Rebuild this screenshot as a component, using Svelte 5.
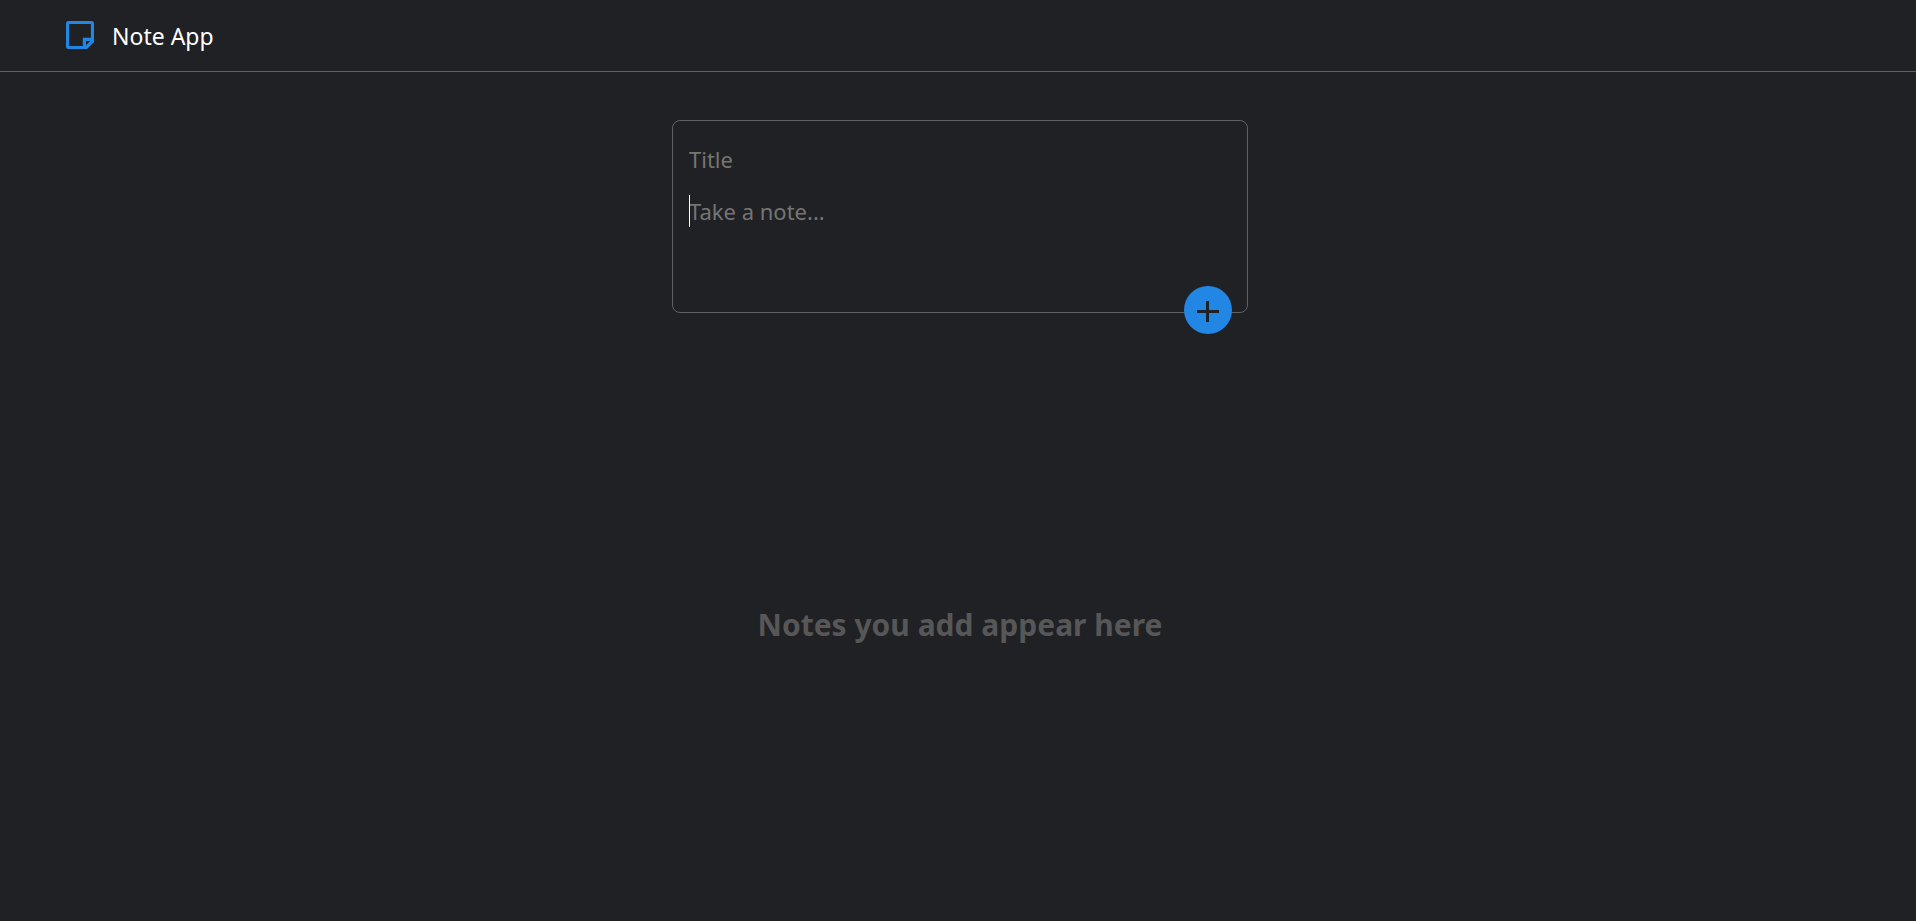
<script>
  let title = $state('');
  let body = $state('');
  let notes = $state([]);

  function addNote(event) {
    event.preventDefault();
    if (!title && !body) return;
    notes.push({ title, body });
    title = '';
    body = '';
  }
</script>

<div class="page">
  <header>
    <svg class="logo" viewBox="0 0 28 28" aria-hidden="true">
      <path
        fill="currentColor"
        fill-rule="evenodd"
        d="M2.5 0H25.5A2.5 2.5 0 0 1 28 2.5V21L21 28H2.5A2.5 2.5 0 0 1 0 25.5V2.5A2.5 2.5 0 0 1 2.5 0ZM3.1 3.1V24.9H16.8V16.8H24.9V3.1ZM20 20V24.2L24.2 20Z"
      />
    </svg>
    <span class="brand">Note App</span>
  </header>

  <main>
    <form onsubmit={addNote}>
      <input type="text" aria-label="Title" placeholder="Title" bind:value={title} />
      <div class="body">
        <textarea aria-label="Note" placeholder="Take a note..." bind:value={body}></textarea>
        {#if !body}<span class="caret"></span>{/if}
      </div>
      <button type="submit" aria-label="Add note">
        <svg viewBox="0 0 48 48" aria-hidden="true">
          <path d="M22 15h3v9h10v3H25v9h-3v-9H13v-3h9z" fill="currentColor" />
        </svg>
      </button>
    </form>

    {#if notes.length === 0}
      <h2>Notes you add appear here</h2>
    {:else}
      <ul>
        {#each notes as note}
          <li><strong>{note.title}</strong><p>{note.body}</p></li>
        {/each}
      </ul>
    {/if}
  </main>
</div>

<style>
  :global(body) {
    margin: 0;
    background: #202124;
  }
  .page {
    display: flex;
    flex-direction: column;
    min-height: 100vh;
    box-sizing: border-box;
    color: #fff;
    font-family: "Segoe UI", "Noto Sans", sans-serif;
  }
  header {
    display: flex;
    align-items: flex-start;
    gap: 18px;
    padding: 21px 66px 20px;
    border-bottom: 1px solid #5f6063;
  }
  .logo {
    width: 28px;
    height: 28px;
    color: #2286e5;
  }
  .brand {
    font-size: 23px;
    line-height: 30px;
  }
  main {
    display: flex;
    flex-direction: column;
    align-items: center;
    padding-left: 4px;
  }
  form {
    position: relative;
    box-sizing: border-box;
    display: flex;
    flex-direction: column;
    gap: 20px;
    width: 576px;
    max-width: 90%;
    margin-top: 48px;
    padding: 22px 16px 21px;
    border: 1px solid #5f6063;
    border-radius: 8px;
  }
  input,
  textarea {
    display: block;
    box-sizing: border-box;
    width: 100%;
    margin: 0;
    padding: 0;
    border: 0;
    outline: 0;
    background: transparent;
    color: #fff;
    font-family: inherit;
    font-size: 22px;
    line-height: 32px;
  }
  input {
    height: 32px;
  }
  textarea {
    height: 96px;
    resize: none;
  }
  ::placeholder {
    color: #757575;
    opacity: 1;
  }
  .body {
    position: relative;
  }
  .caret {
    position: absolute;
    top: 0;
    left: 0;
    width: 1px;
    height: 32px;
    background: #fff;
    pointer-events: none;
  }
  button {
    position: absolute;
    right: 15px;
    bottom: -22px;
    width: 48px;
    height: 48px;
    padding: 0;
    border: 0;
    border-radius: 50%;
    background: #2286e5;
    color: #202124;
    cursor: pointer;
  }
  button svg {
    display: block;
    width: 48px;
    height: 48px;
  }
  h2 {
    margin: 288px 0 0;
    color: #575757;
    font-size: 30px;
    line-height: 48px;
    font-weight: 700;
  }
  ul {
    display: flex;
    flex-wrap: wrap;
    gap: 16px;
    margin: 48px 0;
    padding: 0 66px;
    list-style: none;
  }
  li {
    padding: 16px;
    border: 1px solid #5f6063;
    border-radius: 8px;
  }
</style>
